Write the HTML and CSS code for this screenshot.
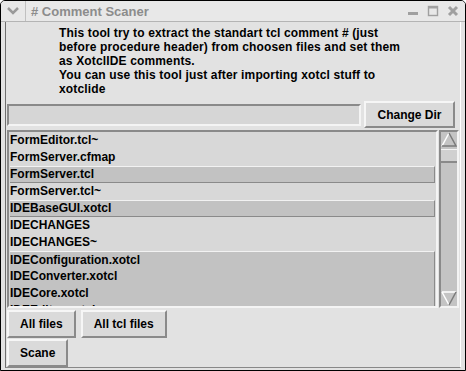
FILE: index.html
```html
<!DOCTYPE html>
<html lang="en">
<head>
    <meta charset="utf-8">
    <title># Comment Scaner</title>
    <link rel="stylesheet" href="styles.css">
</head>
<body>
    <div class="window">
        <div class="titlebar">
            <svg class="menu-icon" width="12" height="8" viewBox="0 0 12 8">
                <path d="M1 1 L6 6 L11 1" fill="none" stroke="#9a9a9a" stroke-width="2.5"/>
            </svg>
            <span class="title">#&nbsp;Comment Scaner</span>
            <div class="controls">
                <svg width="12" height="12" viewBox="0 0 12 12"><rect x="1" y="7" width="10" height="3" fill="#a0a0a0"/></svg>
                <svg width="12" height="12" viewBox="0 0 12 12"><rect x="1.5" y="1.5" width="9" height="9" fill="none" stroke="#a0a0a0" stroke-width="1.4"/><rect x="1" y="1" width="10" height="2.5" fill="#a0a0a0"/></svg>
                <svg width="12" height="12" viewBox="0 0 12 12"><path d="M2 2 L10 10 M10 2 L2 10" stroke="#a0a0a0" stroke-width="3"/></svg>
            </div>
        </div>
        <div class="frame">
            <div class="content">
                <p class="info">This tool try to extract the standart tcl comment # (just<br>
                    before procedure header) from choosen files and set them<br>
                    as XotclIDE comments.<br>
                    You can use this tool just after importing xotcl stuff to<br>
                    xotclide</p>

                <div class="dir-row">
                    <div class="entry"></div>
                    <button class="btn">Change Dir</button>
                </div>

                <div class="list-row">
                    <ul class="listbox">
                        <li>FormEditor.tcl~</li>
                        <li>FormServer.cfmap</li>
                        <li class="sel">FormServer.tcl</li>
                        <li>FormServer.tcl~</li>
                        <li class="sel">IDEBaseGUI.xotcl</li>
                        <li>IDECHANGES</li>
                        <li>IDECHANGES~</li>
                        <li class="sel sel-top">IDEConfiguration.xotcl</li>
                        <li class="sel sel-mid">IDEConverter.xotcl</li>
                        <li class="sel sel-mid">IDECore.xotcl</li>
                        <li class="sel sel-mid">IDEEditor.xotcl</li>
                    </ul>
                    <div class="scrollbar">
                        <svg class="arrow" width="16" height="15" viewBox="0 0 16 15">
                            <path d="M1 14 L8 1 L15 14 Z" fill="#c4c4c4"/>
                            <path d="M1 14 L8 1" stroke="#fff" stroke-width="1.5"/>
                            <path d="M8 1 L15 14 L1 14" fill="none" stroke="#7a7a7a" stroke-width="1.5"/>
                        </svg>
                        <div class="thumb"></div>
                        <div class="trough"></div>
                        <svg class="arrow" width="16" height="15" viewBox="0 0 16 15">
                            <path d="M1 1 L8 14 L15 1 Z" fill="#c4c4c4"/>
                            <path d="M1 1 L15 1 M1 1 L8 14" stroke="#fff" stroke-width="1.5"/>
                            <path d="M8 14 L15 1" stroke="#7a7a7a" stroke-width="1.5"/>
                        </svg>
                    </div>
                </div>

                <div class="btn-row first">
                    <button class="btn">All files</button>
                    <button class="btn">All tcl files</button>
                </div>
                <div class="btn-row">
                    <button class="btn">Scane</button>
                </div>
            </div>
        </div>
    </div>
</body>
</html>
```

FILE: styles.css
```css
body {
    margin: 0;
    padding: 0;
    background-color: #ffffff;
    font-family: "Liberation Sans", Arial, sans-serif;
}

.window {
    width: 466px;
    height: 371px;
    box-sizing: border-box;
    border: 1px solid #000;
    border-radius: 5px 5px 0 0;
    background: #dcdcdc;
    display: flex;
    flex-direction: column;
    overflow: hidden;
}

.titlebar {
    height: 20px;
    flex: none;
    display: flex;
    align-items: center;
    background: #e8e8e8;
    border-bottom: 1px solid #b4b4b4;
}

.menu-icon {
    margin-left: 6px;
    padding-right: 6px;
    border-right: 1px solid #c0c0c0;
    height: 20px;
}

.title {
    margin-left: 5px;
    font-size: 13px;
    font-weight: bold;
    color: #8c8c8c;
}

.controls {
    margin-left: auto;
    margin-right: 6px;
    display: flex;
    gap: 8px;
}

.frame {
    flex: 1;
    display: flex;
    background: #e2e2e2;
    padding: 0 4px 4px 4px;
}

.content {
    flex: 1;
    border-left: 1px solid #6e6e6e;
    border-right: 1px solid #ffffff;
    border-bottom: 1px solid #888;
    padding: 0 0 0 1px;
    display: flex;
    flex-direction: column;
}

.info {
    margin: 4px 0 0 52px;
    font-size: 12px;
    font-weight: bold;
    letter-spacing: 0.15px;
    line-height: 14px;
    color: #000;
    height: 75px;
}

.dir-row {
    display: flex;
    align-items: center;
}

.entry {
    width: 350px;
    height: 18px;
    border: 2px solid;
    border-color: #8a8a8a #f4f4f4 #f4f4f4 #8a8a8a;
    background: #d6d6d6;
}

.btn {
    font-family: "Liberation Sans", Arial, sans-serif;
    font-size: 12px;
    font-weight: bold;
    color: #000;
    background: #dadada;
    border: 2px solid;
    border-color: #f6f6f6 #8a8a8a #8a8a8a #f6f6f6;
    padding: 0 11px;
    height: 27px;
    margin: 0;
}

.dir-row .btn {
    margin-left: 3px;
    width: 91px;
    padding: 0;
}

.list-row {
    display: flex;
    margin-top: 2px;
    height: 178px;
}

.listbox {
    list-style: none;
    margin: 0;
    padding: 0 1px 0 1px;
    width: 431px;
    box-sizing: border-box;
    border: 2px solid;
    border-color: #8a8a8a #f4f4f4 #f4f4f4 #8a8a8a;
    background: #d8d8d8;
    overflow: hidden;
}

.listbox li {
    height: 17px;
    line-height: 17px;
    font-size: 12px;
    font-weight: bold;
    padding-left: 0;
    box-sizing: border-box;
}

.listbox li.sel {
    background: #c2c2c2;
    border-top: 1px solid #f2f2f2;
    border-bottom: 1px solid #8a8a8a;
    border-right: 1px solid #8a8a8a;
    line-height: 15px;
}

.listbox li.sel-top {
    border-bottom: none;
    line-height: 16px;
}

.listbox li.sel-mid {
    border-top: none;
    border-bottom: none;
    line-height: 17px;
}

.scrollbar {
    width: 20px;
    margin-left: 1px;
    box-sizing: border-box;
    border: 2px solid;
    border-color: #8a8a8a #f4f4f4 #f4f4f4 #8a8a8a;
    background: #c4c4c4;
    display: flex;
    flex-direction: column;
}

.arrow {
    display: block;
    flex: none;
}

.thumb {
    height: 14px;
    margin-top: 2px;
    box-sizing: border-box;
    border-bottom: 2px solid #8a8a8a;
    border-top: 1px solid #f4f4f4;
    background: #d0d0d0;
}

.trough {
    flex: 1;
}

.btn-row {
    display: flex;
    gap: 5px;
    margin-top: 1px;
}

.btn-row.first {
    margin-top: 2px;
}

.btn-row .btn {
    height: 28px;
}
```
